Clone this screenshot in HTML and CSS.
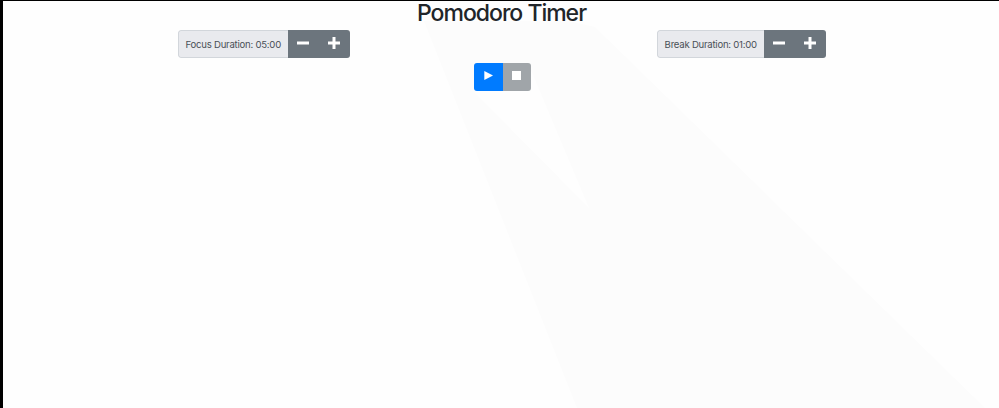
FILE: index.html
```html
<!DOCTYPE html>
<html lang="en">
<head>
<meta charset="utf-8">
<title>Pomodoro Timer</title>
<link rel="stylesheet" href="styles.css">
</head>
<body>
<main class="app">
  <svg class="backdrop" viewBox="0 0 996 407" aria-hidden="true">
    <path d="M421 20L574 407H982L592 26L565 20ZM471 91L586 207L525 62Z" fill-rule="evenodd"/>
  </svg>
  <h1 class="title">Pomodoro Timer</h1>
  <div class="durations">
    <div class="group">
      <span class="label focus">Focus Duration: 05:00</span>
      <button class="step" aria-label="Decrease focus"><svg width="12" height="12" viewBox="0 0 12 12"><path d="M0 4.5h12v3H0z"/></svg></button>
      <button class="step" aria-label="Increase focus"><svg width="12" height="12" viewBox="0 0 12 12"><path d="M4.5 0h3v4.5H12v3H7.5V12h-3V7.5H0v-3h4.5z"/></svg></button>
    </div>
    <div class="group">
      <span class="label break">Break Duration: 01:00</span>
      <button class="step" aria-label="Decrease break"><svg width="12" height="12" viewBox="0 0 12 12"><path d="M0 4.5h12v3H0z"/></svg></button>
      <button class="step" aria-label="Increase break"><svg width="12" height="12" viewBox="0 0 12 12"><path d="M4.5 0h3v4.5H12v3H7.5V12h-3V7.5H0v-3h4.5z"/></svg></button>
    </div>
  </div>
  <div class="group controls">
    <button class="play" aria-label="Play"><svg width="9" height="9" viewBox="0 0 9 9"><path d="M.3 0L9 4.5L.3 9z"/></svg></button>
    <button class="stop" aria-label="Stop" disabled><svg width="9" height="9" viewBox="0 0 9 9"><path d="M0 0h9v9H0z"/></svg></button>
  </div>
</main>
</body>
</html>
```
FILE: styles.css
```css
* { box-sizing: border-box; }

body {
  margin: 0;
  height: 408px;
  overflow: hidden;
  border-top: 1px solid #000;
  border-left: 3px solid #000;
  background: #fefefe;
  font-family: Inter, "Liberation Sans", sans-serif;
}

.app {
  position: relative;
  height: 407px;
}

.backdrop {
  position: absolute;
  inset: 0;
  z-index: -1;
  width: 996px;
  height: 407px;
  fill: #fcfcfc;
}

.title {
  margin: 0 0 5px 1px;
  height: 24px;
  line-height: 24px;
  font-size: 23px;
  font-weight: 500;
  letter-spacing: -1px;
  text-align: center;
  color: #212529;
}

.durations {
  display: grid;
  grid-template-columns: 1fr 1fr;
  justify-items: center;
  margin: 0 19px 5px 22px;
}

.group {
  display: flex;
  height: 28px;
  border-radius: 3px;
  overflow: hidden;
}

.label {
  border: 1px solid #d2d6db;
  border-right: 0;
  border-radius: 3px 0 0 3px;
  background: #e9eaee;
  color: #495057;
  font-size: 9.6px;
  letter-spacing: -0.25px;
  line-height: 27px;
  text-align: center;
  white-space: nowrap;
}

.focus { width: 110px; }
.break { width: 107px; }

button {
  display: flex;
  align-items: center;
  justify-content: center;
  height: 28px;
  margin: 0;
  padding: 0 0 2px;
  border: 0;
}

button svg { fill: #fff; }

.step {
  width: 31px;
  background: #6c757d;
}

.controls {
  width: 57px;
  margin: 0 auto 0 471px;
}

.play {
  width: 29px;
  padding-bottom: 3px;
  background: #007bff;
}

.stop {
  width: 28px;
  padding: 0 2px 3px 0;
  background: #a0a5a9;
}
```
